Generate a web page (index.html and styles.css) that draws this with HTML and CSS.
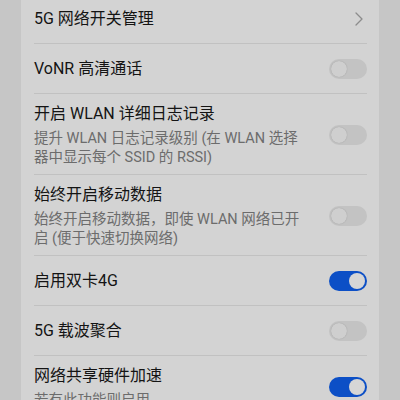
FILE: index.html
```html
<!DOCTYPE html>
<html lang="zh-CN">
<head>
  <meta charset="UTF-8" />
  <title>移动网络</title>
  <link rel="stylesheet" href="styles.css">
</head>
<body>
  <div class="card">
    <div class="row">
      <div class="text">
        <div class="title">5G 网络开关管理</div>
      </div>
      <svg class="chevron" width="8" height="14" viewBox="0 0 8 14">
        <path d="M1 1 L7 7 L1 13" fill="none" stroke="#8c8c8c" stroke-width="1.3" stroke-linecap="round" stroke-linejoin="round"/>
      </svg>
    </div>

    <div class="row">
      <div class="text">
        <div class="title">VoNR 高清通话</div>
      </div>
      <span class="switch"></span>
    </div>

    <div class="row">
      <div class="text">
        <div class="title">开启 WLAN 详细日志记录</div>
        <div class="sub">提升 WLAN 日志记录级别 (在 WLAN 选择器中显示每个 SSID 的 RSSI)</div>
      </div>
      <span class="switch"></span>
    </div>

    <div class="row">
      <div class="text">
        <div class="title">始终开启移动数据</div>
        <div class="sub">始终开启移动数据，即使 WLAN 网络已开启 (便于快速切换网络)</div>
      </div>
      <span class="switch"></span>
    </div>

    <div class="row">
      <div class="text">
        <div class="title">启用双卡4G</div>
      </div>
      <span class="switch on"></span>
    </div>

    <div class="row">
      <div class="text">
        <div class="title">5G 载波聚合</div>
      </div>
      <span class="switch"></span>
    </div>

    <div class="row">
      <div class="text">
        <div class="title">网络共享硬件加速</div>
        <div class="sub">若有此功能则启用</div>
      </div>
      <span class="switch on"></span>
    </div>
  </div>
</body>
</html>
```

FILE: styles.css
```css
body {
  margin: 0;
  padding: 0 21px;
  background: #c6c6c6;
  font-family: Roboto, "Noto Sans CJK SC", sans-serif;
  color: #141414;
  overflow: hidden;
}

/* list is scrolled, so the top of the card sits above the viewport */
.card {
  background: #d3d3d3;
  margin-top: -6px;
  padding: 0 12px 0 13px;
  border-radius: 0 0 18px 18px;
}

.row {
  display: flex;
  align-items: center;
  justify-content: space-between;
  min-height: 50px;
  padding: 8px 0 7px;
  box-sizing: border-box;
  border-bottom: 1px solid #c1c1c1;
}

.row:last-child {
  border-bottom: none;
}

.text {
  width: 276px;
}

.title {
  font-size: 16px;
  line-height: 24px;
}

.sub {
  margin-top: 3px;
  font-size: 14.5px;
  line-height: 19px;
  color: #6c6c6c;
}

.chevron {
  margin-right: 4px;
}

/* toggle switch */
.switch {
  position: relative;
  flex: none;
  width: 38px;
  height: 20px;
  border-radius: 10px;
  background: #c3c3c3;
}

.switch::after {
  content: "";
  position: absolute;
  top: 2px;
  left: 2px;
  width: 16px;
  height: 16px;
  border-radius: 50%;
  background: #cfcfcf;
  box-shadow: 0 0 1px rgba(0, 0, 0, 0.25);
}

.switch.on {
  background: #0c4fc6;
}

.switch.on::after {
  left: 20px;
  background: #d6d6d6;
  box-shadow: none;
}
```
